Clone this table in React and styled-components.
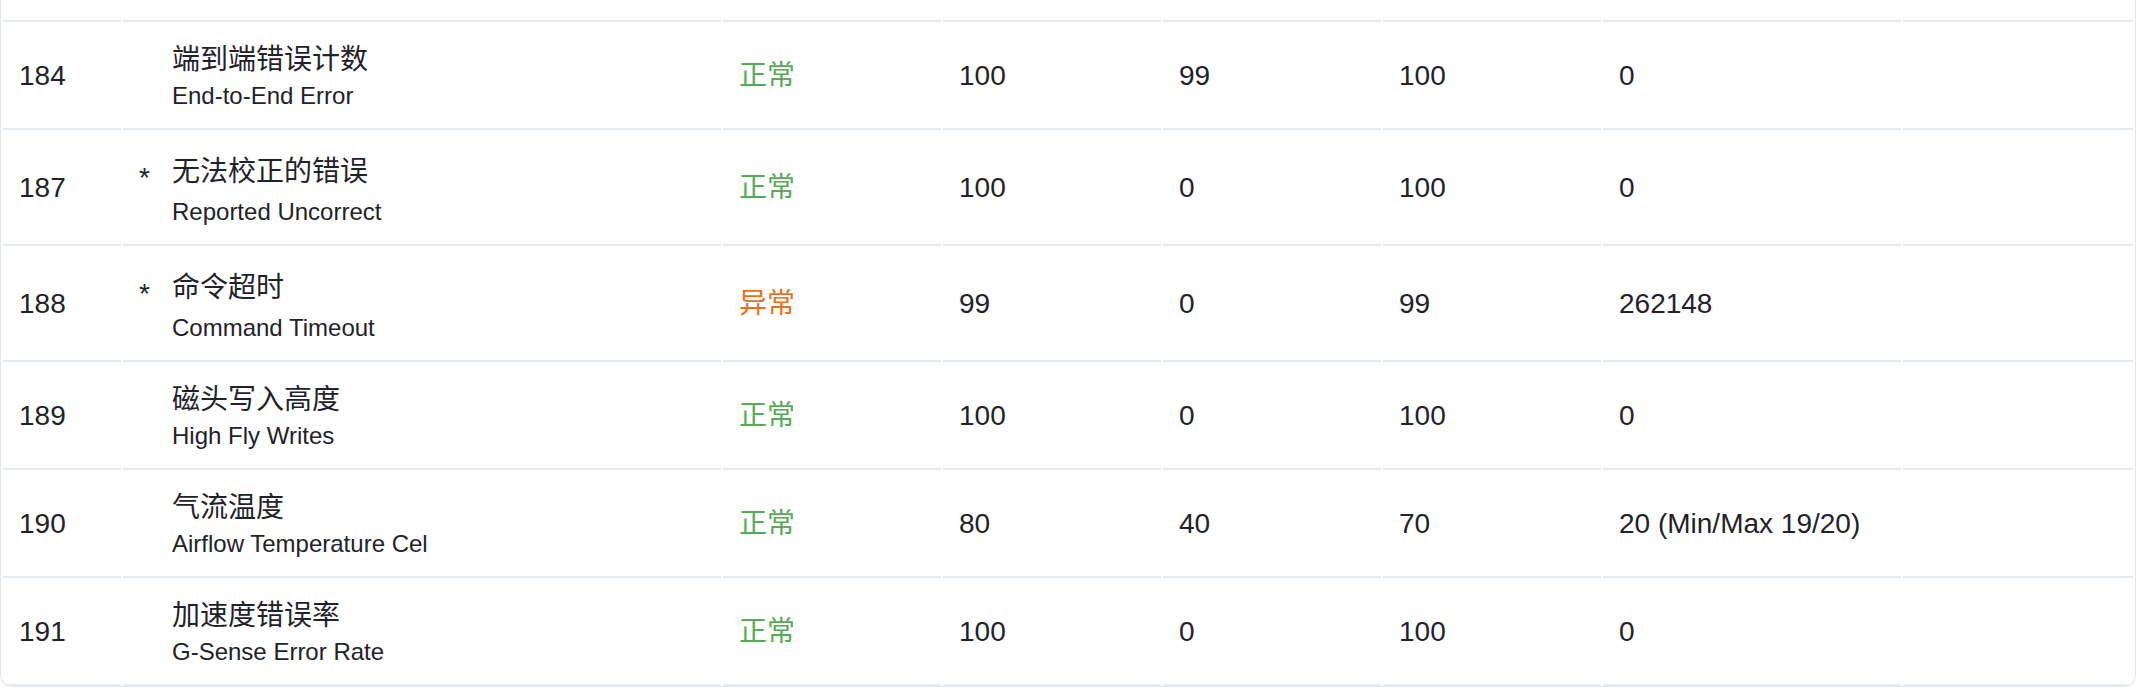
import React from 'react';
import styled, { createGlobalStyle } from 'styled-components';

const GlobalStyle = createGlobalStyle`
  html, body {
    margin: 0;
    padding: 0;
    background: #ffffff;
  }
  body {
    font-family: "Liberation Sans", "Noto Sans CJK SC", sans-serif;
    color: #1f2329;
  }
`;

const Panel = styled.div`
  width: 2136px;
  box-sizing: border-box;
  border: 1px solid #e1e6ee;
  border-top: none;
  border-radius: 0 0 12px 12px;
  overflow: hidden;
  background: #ffffff;
`;

const Table = styled.table`
  width: 100%;
  table-layout: fixed;
  border-collapse: separate;
  border-spacing: 2px 0;
`;

const Col = styled.col`
  width: ${(p) => (p.$w ? `${p.$w}px` : 'auto')};
`;

const Cell = styled.td`
  box-sizing: border-box;
  padding: ${(p) => (p.$filler ? '0' : '18px 16px 16px')};
  height: ${(p) => (p.$filler ? '22px' : 'auto')};
  border-bottom: 2px solid #e6eaf1;
  vertical-align: middle;
  font-size: 28px;
  line-height: 32px;
  color: #1f2329;
  white-space: nowrap;
`;

const NameStack = styled.div`
  display: flex;
  flex-direction: column;
`;

const TitleLine = styled.div`
  display: flex;
  align-items: center;
  min-height: 40px;
`;

const StarSlot = styled.span`
  flex: none;
  width: 33px;
  padding-top: 12px;
  font-size: 28px;
  line-height: 36px;
  color: #1f2329;
`;

const CnName = styled.span`
  font-size: 28px;
  line-height: 40px;
`;

const EnName = styled.div`
  padding-left: 33px;
  font-size: 24px;
  line-height: 32px;
  color: #1f2329;
`;

const Status = styled.span`
  color: ${(p) => (p.$bad ? '#e6721f' : '#56aa58')};
`;

const columns = [118, 598, 218, 218, 218, 218, 298, null];

const rows = [
  { id: '184', cn: '端到端错误计数', en: 'End-to-End Error', ok: true, v: '100', w: '99', t: '100', raw: '0' },
  { id: '187', star: true, cn: '无法校正的错误', en: 'Reported Uncorrect', ok: true, v: '100', w: '0', t: '100', raw: '0' },
  { id: '188', star: true, cn: '命令超时', en: 'Command Timeout', ok: false, v: '99', w: '0', t: '99', raw: '262148' },
  { id: '189', cn: '磁头写入高度', en: 'High Fly Writes', ok: true, v: '100', w: '0', t: '100', raw: '0' },
  { id: '190', cn: '气流温度', en: 'Airflow Temperature Cel', ok: true, v: '80', w: '40', t: '70', raw: '20 (Min/Max 19/20)' },
  { id: '191', cn: '加速度错误率', en: 'G-Sense Error Rate', ok: true, v: '100', w: '0', t: '100', raw: '0' },
];

export default function App() {
  return (
    <>
      <GlobalStyle />
      <Panel>
        <Table>
          <colgroup>
            {columns.map((w, i) => (
              <Col key={i} $w={w} />
            ))}
          </colgroup>
          <tbody>
            <tr>
              {columns.map((_, i) => (
                <Cell key={i} $filler />
              ))}
            </tr>
            {rows.map((r) => (
              <tr key={r.id}>
                <Cell>{r.id}</Cell>
                <Cell>
                  <NameStack>
                    <TitleLine>
                      <StarSlot>{r.star ? '*' : ''}</StarSlot>
                      <CnName>{r.cn}</CnName>
                    </TitleLine>
                    <EnName>{r.en}</EnName>
                  </NameStack>
                </Cell>
                <Cell>
                  <Status $bad={!r.ok}>{r.ok ? '正常' : '异常'}</Status>
                </Cell>
                <Cell>{r.v}</Cell>
                <Cell>{r.w}</Cell>
                <Cell>{r.t}</Cell>
                <Cell>{r.raw}</Cell>
                <Cell />
              </tr>
            ))}
          </tbody>
        </Table>
      </Panel>
    </>
  );
}
